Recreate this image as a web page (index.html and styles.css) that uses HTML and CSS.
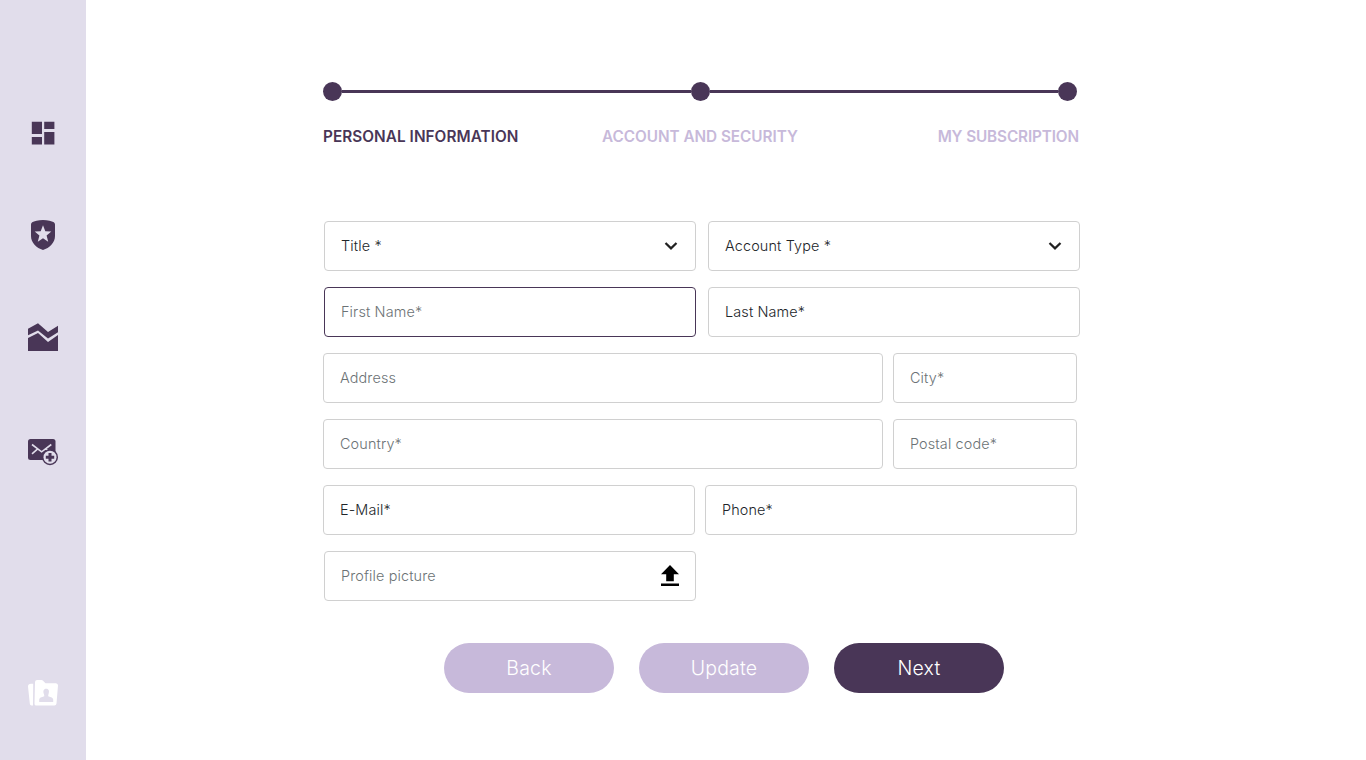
FILE: index.html
```html
<!DOCTYPE html>
<html lang="en">
<head>
<meta charset="utf-8">
<title>Personal information</title>
<link rel="stylesheet" href="styles.css">
</head>
<body>
<div class="app">
  <nav class="sidebar">
    <svg class="icon icon-dashboard" viewBox="0 0 32 32"><path d="M4.800 4.700h10.200v12.300H4.800zM17.200 4.700h10.200v7.400H17.200zM17.200 15h10.200v12.500H17.200zM4.800 20h10.200v7.500H4.800z"/></svg>
    <svg class="icon icon-shield" viewBox="0 0 32 32"><path fill-rule="evenodd" d="M16 1C20.6 1 25 2 26.800 3.300Q28 4 28 5.500V17C28 23.500 22.500 29 16 31C9.500 29 4 23.500 4 17V5.500Q4 4 5.200 3.300C7 2 11.400 1 16 1zM16 6.300L13.700 12.200L7.700 12.600L12.400 16.600L10.800 22.700L16 19.300L21.200 22.700L19.600 16.600L24.300 12.600L18.300 12.200z" /></svg>
    <svg class="icon icon-chart" viewBox="0 0 32 32"><path d="M1 7.700L11 2.200L21 11L31 4.800V11.200L21 17.600L11 9.600L1 14.200zM1 17L11 11.900L21 20.900L31 14V30H1z"/></svg>
    <svg class="icon icon-mail" viewBox="0 0 32 32"><rect x="1" y="3" width="27.500" height="21" rx="2.500"/><path class="mail-line" d="M5 8.500L14.600 15.800L24.300 8.500M5 17.800L10.700 12.800M24.300 17.800L18.700 12.800"/><circle cx="23" cy="21.200" r="8"/><circle class="mail-ring" cx="23" cy="21.200" r="6.500"/><path class="mail-plus" d="M23 17v8.400M18.800 21.200h8.400"/></svg>
    <svg class="icon icon-folder" viewBox="0 0 32 32"><path d="M1 7.500Q1 4.800 4 4.800H6.200L6 26.500H4.500Q3 26.500 2.800 24.500z"/><path fill-rule="evenodd" d="M8 3Q8.200 1 10 1H14.500Q16 1 17 2.700L18.500 4.200H29Q31 4.400 31 6.500L29.500 24.500Q29.300 26.600 27.300 26.600H8.800Q7.500 26.600 7.500 24.500zM19.200 9.800C16.500 9.800 15.900 12.200 16.800 14.700Q17.300 16 17.300 17.300C14.300 18.200 12.200 18.900 12.200 20.500V23H26.200V20.500C26.200 18.900 24.100 18.200 21.200 17.300Q21.200 16 21.600 14.700C22.500 12.200 21.900 9.800 19.200 9.800z"/></svg>
  </nav>
  <main class="content">
    <div class="stepper">
      <div class="track"><span class="dot"></span><span class="line"></span><span class="dot"></span><span class="line"></span><span class="dot"></span></div>
      <div class="steps"><span class="step active">PERSONAL INFORMATION</span><span class="step security">ACCOUNT AND SECURITY</span><span class="step subscription">MY SUBSCRIPTION</span></div>
    </div>
    <form class="form">
      <div class="row wide">
        <div class="field filled"><span>Title *</span><svg class="chevron" viewBox="0 0 16 16"><path d="M2.500 5L8 10.400L13.500 5"/></svg></div>
        <div class="field filled"><span>Account Type *</span><svg class="chevron" viewBox="0 0 16 16"><path d="M2.500 5L8 10.400L13.500 5"/></svg></div>
      </div>
      <div class="row wide">
        <div class="field focused"><span>First Name*</span></div>
        <div class="field filled"><span>Last Name*</span></div>
      </div>
      <div class="row split">
        <div class="field"><span>Address</span></div>
        <div class="field"><span>City*</span></div>
      </div>
      <div class="row split">
        <div class="field"><span>Country*</span></div>
        <div class="field"><span>Postal code*</span></div>
      </div>
      <div class="row half">
        <div class="field filled"><span>E-Mail*</span></div>
        <div class="field filled"><span>Phone*</span></div>
      </div>
      <div class="row wide">
        <div class="field"><span>Profile picture</span><svg class="upload" viewBox="0 0 18 22"><path d="M9 0L18 9.300H12.800V16.200H5.200V9.300H0zM0 18.600H18V21H0z"/></svg></div>
      </div>
    </form>
    <div class="actions">
      <button class="btn" type="button">Back</button>
      <button class="btn" type="button">Update</button>
      <button class="btn primary" type="button">Next</button>
    </div>
  </main>
</div>
</body>
</html>
```
FILE: styles.css
```css
* { box-sizing: border-box; }
body { margin: 0; background: #fff; font-family: Inter, "Liberation Sans", sans-serif; }
.app { display: flex; height: 760px; overflow: hidden; }
.sidebar { width: 86px; flex: none; background: #e1ddeb; display: flex; flex-direction: column; align-items: center; padding-top: 117px; }
.icon { width: 32px; height: 32px; flex: none; fill: #493657; }
.icon-shield { margin-top: 70px; }
.icon-chart { margin-top: 70px; }
.icon-mail { margin-top: 83px; }
.icon-folder { margin-top: 211px; fill: #fff; }
.mail-line { fill: none; stroke: #e1ddeb; stroke-width: 1.6; }
.mail-ring { fill: #e1ddeb; }
.mail-plus { fill: none; stroke: #493657; stroke-width: 3; }
.content { padding: 82px 0 0 237px; }
.stepper { width: 756px; }
.track { display: flex; align-items: center; width: 754px; }
.dot { width: 19px; height: 19px; border-radius: 50%; background: #493657; }
.line { flex: 1; height: 3px; background: #493657; }
.steps { display: grid; grid-template-columns: 279px 1fr auto; margin-top: 26px; height: 20px; line-height: 20px; font-size: 15.3px; font-weight: 600; white-space: nowrap; }
.step { color: #c7b9da; }
.step.active { color: #493657; letter-spacing: 0.06px; }
.security { letter-spacing: -0.03px; }
.subscription { letter-spacing: -0.12px; }
.form { display: flex; flex-direction: column; gap: 16px; margin-top: 74px; }
.row { display: grid; height: 50px; }
.wide { grid-template-columns: 372px 372px; gap: 12px; margin-left: 1px; }
.split { grid-template-columns: 560px 184px; gap: 10px; }
.half { grid-template-columns: 372px 372px; gap: 10px; }
.field { display: flex; align-items: center; justify-content: space-between; padding: 0 16px; border: 1px solid #d0d0d0; border-radius: 4px; color: #6c757d; color: #6b7275; font-size: 14.4px; font-weight: 360; letter-spacing: 0.14px; line-height: 20px; white-space: nowrap; }
.filled { color: #212529; }
.focused { border-color: #493657; }
.chevron { width: 16px; height: 16px; margin-right: 0.5px; fill: none; stroke: #212121; stroke-width: 2.2; }
.upload { width: 18px; height: 22px; fill: #000; }
.actions { display: flex; gap: 25px; margin: 42px 0 0 121px; }
.btn { width: 170px; height: 50px; padding: 0; border: 0; border-radius: 25px; background: #c7b9da; color: #fff; font-family: inherit; font-size: 19.5px; font-weight: 330; letter-spacing: 0.2px; }
.primary { background: #493657; }
```
